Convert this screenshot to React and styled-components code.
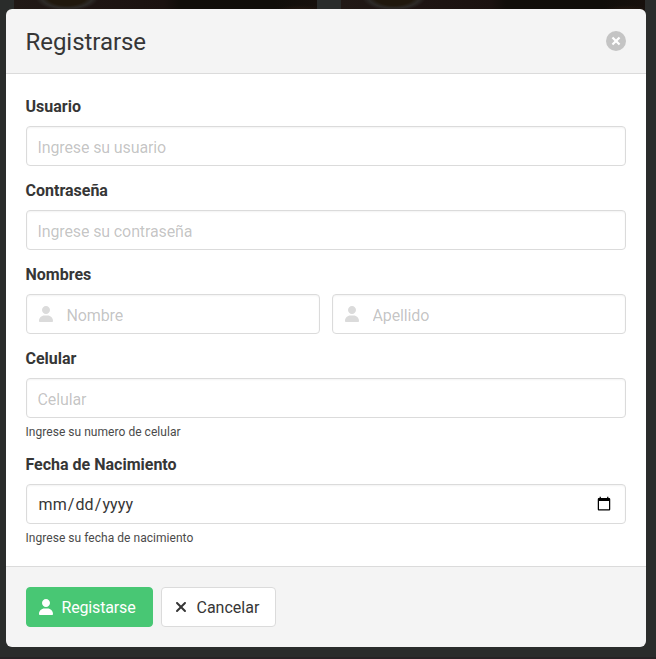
import React from "react";
import styled, { createGlobalStyle, css } from "styled-components";

const GlobalStyle = createGlobalStyle`
  *, *::before, *::after { box-sizing: border-box; }
  body {
    margin: 0;
    overflow: hidden;
    background: #2a2c2b;
    color: #4a4a4a;
    font-family: Roboto, sans-serif;
    font-size: 16px;
    line-height: 1.5;
    text-rendering: optimizeLegibility;
  }
  input, button { font-family: inherit; }
`;

const Page = styled.div`
  display: grid;
  height: 659px;
  background: linear-gradient(#2a2c2b 657px, #272325 657px);
`;

const Backdrop = styled.div`
  grid-area: 1 / 1;
  display: grid;
  grid-template-columns: 303px 304px;
  gap: 24px;
  padding-left: 14px;
  height: 11px;
`;

const Photo = styled.div`
  background:
    radial-gradient(ellipse 32px 14px at 53px -3px, #20180d 60%, #2d2a27 80%, transparent 100%),
    radial-gradient(ellipse 24px 5px at 286px 10px, #231811, transparent),
    linear-gradient(90deg, #211916 0, #1e1513 80px, #1b1210 150px, #110e0a 165px, #100e0a 260px, #17100c 100%);
`;

const Card = styled.form`
  grid-area: 1 / 1;
  display: flex;
  flex-direction: column;
  width: 640px;
  height: 638px;
  margin: 9px 0 0 6px;
  overflow: hidden;
  border-radius: 6px;
  z-index: 1;
`;

const Header = styled.header`
  display: flex;
  align-items: center;
  justify-content: space-between;
  padding: 20px;
  background: #f4f4f4;
  border-bottom: 1px solid #dbdbdb;
`;

const Title = styled.p`
  height: 24px;
  margin: 0 0 0 -0.5px;
  color: #363636;
  font-size: 24px;
  letter-spacing: -0.05px;
  line-height: 26px;
`;

const Close = styled.button`
  display: grid;
  place-items: center;
  width: 20px;
  height: 20px;
  padding: 0;
  border: 0;
  border-radius: 50%;
  background: #c4c4c4;
`;

const Body = styled.section`
  display: flex;
  flex-direction: column;
  flex: 1;
  gap: 12px;
  padding: 20px;
  background: #fff;
`;

const Label = styled.label`
  display: block;
  height: 24px;
  margin: 0 0 8px -0.5px;
  color: #363636;
  font-weight: 700;
  line-height: 26px;
`;

const Row = styled.div`
  display: flex;
  gap: 12px;
`;

const Control = styled.div`
  position: relative;
  flex: 1;
`;

const Input = styled.input`
  display: block;
  width: 100%;
  height: 40px;
  padding: 9px 11px 7px ${(p) => (p.$icon ? "39.5px" : "10.5px")};
  border: 1px solid #dbdbdb;
  border-radius: 4px;
  outline: 0;
  background: #fff;
  box-shadow: inset 0 1px 2px rgba(10, 10, 10, 0.05);
  color: #363636;
  font-size: 16px;
  letter-spacing: -0.12px;
  line-height: 22px;
  &::placeholder { color: rgba(54, 54, 54, 0.3); }
  &[type="date"] {
    padding-top: 7px;
    letter-spacing: 0.1px;
    line-height: 24px;
  }
  &::-webkit-datetime-edit { padding-top: 2px; }
`;

const IconSlot = styled.span`
  position: absolute;
  inset: 0 auto 0 0;
  display: grid;
  place-items: center;
  width: 39px;
  color: #dbdbdb;
`;

const Help = styled.p`
  height: 18px;
  margin: 4px 0 0 -0.5px;
  font-size: 12px;
  letter-spacing: 0.04px;
  line-height: 20px;
`;

const Footer = styled.footer`
  display: flex;
  gap: 8px;
  padding: 20px;
  background: #f4f4f4;
  border-top: 1px solid #dbdbdb;
`;

const Button = styled.button`
  display: flex;
  align-items: center;
  width: ${(p) => p.$width}px;
  height: 40px;
  padding: 0 0 0 7px;
  border: 1px solid #dbdbdb;
  border-radius: 4px;
  background: #fff;
  color: #363636;
  font-size: 16px;
  line-height: 24px;
  white-space: nowrap;
  ${(p) => p.$primary && css`
    border-color: #48c774;
    background: #48c774;
    color: #fff;
    letter-spacing: -0.16px;
  `}
`;

const ButtonIcon = styled.span`
  display: grid;
  place-items: center;
  width: 23px;
  height: 24px;
  margin-right: 4.5px;
`;

const ButtonText = styled.span`
  padding-top: 2px;
`;

const UserIcon = () => (
  <svg width="14" height="16" viewBox="0 0 448 512" fill="currentColor" aria-hidden="true">
    <path d="M224 256c70.7 0 128-57.31 128-128S294.7 0 224 0 96 57.31 96 128s57.3 128 128 128zm50.7 48H173.3C77.61 304 0 381.6 0 477.3c0 19.14 15.52 34.67 34.66 34.67h378.7C432.5 512 448 496.5 448 477.3 448 381.6 370.4 304 274.7 304z" />
  </svg>
);

const CrossIcon = () => (
  <svg width="10" height="16" viewBox="0 0 320 512" fill="currentColor" overflow="visible" aria-hidden="true">
    <path d="M310.6 361.4c12.5 12.5 12.5 32.75 0 45.25C304.4 412.9 296.2 416 288 416s-16.38-3.125-22.62-9.375L160 301.3 54.63 406.6C48.38 412.9 40.19 416 32 416s-16.37-3.1-22.625-9.4c-12.5-12.5-12.5-32.75 0-45.25l105.4-105.4L9.375 150.6c-12.5-12.5-12.5-32.75 0-45.25s32.75-12.5 45.25 0L160 210.8l105.4-105.4c12.5-12.5 32.75-12.5 45.25 0s12.5 32.75 0 45.25l-105.4 105.4L310.6 361.4z" />
  </svg>
);

const Field = ({ id, label, help, children }) => (
  <div>
    <Label htmlFor={id}>{label}</Label>
    {children}
    {help && <Help>{help}</Help>}
  </div>
);

const NameInput = (props) => (
  <Control>
    <Input $icon type="text" {...props} />
    <IconSlot><UserIcon /></IconSlot>
  </Control>
);

export default function App() {
  return (
    <Page>
      <GlobalStyle />
      <Backdrop>
        <Photo />
        <Photo />
      </Backdrop>
      <Card>
        <Header>
          <Title>Registrarse</Title>
          <Close type="button" aria-label="Cerrar">
            <svg width="20" height="20" viewBox="0 0 20 20" stroke="#fff" strokeWidth="2.2">
              <path d="M6.46 6.46l7.08 7.08M13.54 6.46l-7.08 7.08" />
            </svg>
          </Close>
        </Header>
        <Body>
          <Field id="usuario" label="Usuario">
            <Input id="usuario" type="text" placeholder="Ingrese su usuario" />
          </Field>
          <Field id="clave" label="Contraseña">
            <Input id="clave" type="password" placeholder="Ingrese su contraseña" />
          </Field>
          <Field id="nombre" label="Nombres">
            <Row>
              <NameInput id="nombre" placeholder="Nombre" />
              <NameInput placeholder="Apellido" />
            </Row>
          </Field>
          <Field id="celular" label="Celular" help="Ingrese su numero de celular">
            <Input id="celular" type="tel" placeholder="Celular" />
          </Field>
          <Field id="fecha" label="Fecha de Nacimiento" help="Ingrese su fecha de nacimiento">
            <Input id="fecha" type="date" />
          </Field>
        </Body>
        <Footer>
          <Button type="button" $primary $width={127}>
            <ButtonIcon><UserIcon /></ButtonIcon>
            <ButtonText>Registarse</ButtonText>
          </Button>
          <Button type="button" $width={115}>
            <ButtonIcon><CrossIcon /></ButtonIcon>
            <ButtonText>Cancelar</ButtonText>
          </Button>
        </Footer>
      </Card>
    </Page>
  );
}
